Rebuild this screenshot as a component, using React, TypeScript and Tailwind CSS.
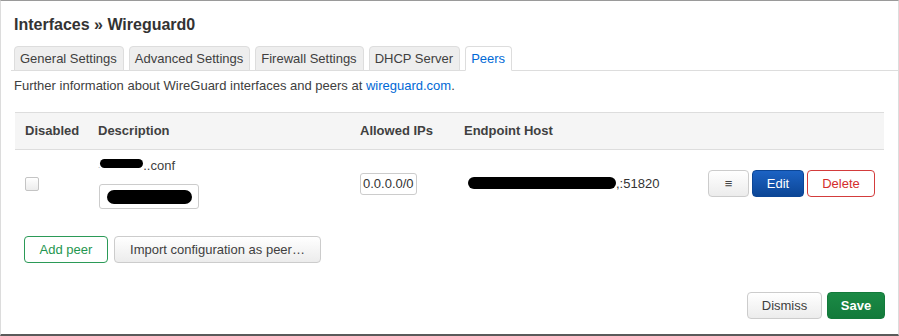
const TABS = [
  { label: 'General Settings', active: false },
  { label: 'Advanced Settings', active: false },
  { label: 'Firewall Settings', active: false },
  { label: 'DHCP Server', active: false },
  { label: 'Peers', active: true },
]

// redaction blob, as in the screenshot
function Blot({ className }: { className: string }) {
  return <span className={`inline-block bg-black rounded-full ${className}`} />
}

export default function App() {
  return (
    <div className="w-[899px] h-[336px] bg-white border-t border-x border-b-[2px] border-t-[#9a9a9a] border-x-[#dcdcdc] border-b-[#5a5a5a] flex flex-col font-['Liberation_Sans',Arial,sans-serif] text-[13px] text-[#404040]">

      {/* Title */}
      <h3 className="pl-[13px] pt-[14px] text-[16px] leading-[20px] font-bold text-[#333]">
        Interfaces » Wireguard0
      </h3>

      {/* Tabs */}
      <ul className="mt-[11px] ml-[10px] pl-[3px] flex gap-[5px] border-b border-[#ddd]">
        {TABS.map(tab => (
          <li
            key={tab.label}
            className={`h-[25px] pl-[5px] pr-[6px] leading-[23px] border rounded-t-[4px] -mb-px ${
              tab.active
                ? 'bg-white border-[#ddd] border-b-white text-[#0069d6]'
                : 'bg-[#eeeeee] border-[#ddd] text-[#404040]'
            }`}
          >
            {tab.label}
          </li>
        ))}
      </ul>

      <p className="mt-[7px] pl-[13px] leading-[16px]">
        Further information about WireGuard interfaces and peers at{' '}
        <span className="text-[#0069d6]">wireguard.com</span>.
      </p>

      {/* Peers table */}
      <div className="mt-[18px] mx-[14px]">
        <div className="grid grid-cols-[73px_262px_104px_1fr] h-[38px] items-center bg-[#f5f5f5] border-y border-[#ddd] font-bold text-[#404040]">
          <div className="pl-[10px]">Disabled</div>
          <div className="pl-[10px]">Description</div>
          <div className="pl-[10px]">Allowed IPs</div>
          <div className="pl-[10px]">Endpoint Host</div>
        </div>

        <div className="grid grid-cols-[73px_262px_104px_1fr] items-center pt-[8px] pb-[9px]">
          <div className="pl-[10px]">
            <div className="w-[14px] h-[14px] border border-[#c4c4c4] rounded-[2px] bg-gradient-to-b from-white to-[#ececec]" />
          </div>

          <div className="pl-[10px] flex flex-col">
            <div className="h-[16px] leading-[16px] flex items-center">
              <span className="text-[8px] text-[#999]">.</span>
              <Blot className="w-[43px] h-[9px] -mt-[6px]" />
              <span>..conf</span>
            </div>
            <div className="mt-[10px] ml-[1px] w-[100px] h-[25px] border border-[#ccc] rounded-[3px] flex items-center justify-center">
              <Blot className="w-[85px] h-[14px]" />
            </div>
          </div>

          <div className="pl-[10px]">
            <div className="inline-block h-[22px] px-[2px] leading-[20px] border border-[#ccc] rounded-[3px] text-[#333]">
              0.0.0.0/0
            </div>
          </div>

          <div className="pl-[14px] flex items-center">
            <Blot className="w-[148px] h-[12px] -mt-[2px]" />
            <span className="text-[#333]">,:51820</span>
            <div className="ml-auto mr-[9px] flex gap-[3px]">
              <button className="w-[41px] h-[27px] border border-[#ccc] rounded-[4px] bg-gradient-to-b from-white to-[#ececec] text-[#444]">
                ≡
              </button>
              <button className="w-[52px] h-[27px] rounded-[4px] bg-gradient-to-b from-[#1c63c4] to-[#0c4696] text-white border border-[#0c4696]">
                Edit
              </button>
              <button className="w-[68px] h-[27px] rounded-[4px] border border-[#d33c3c] bg-white text-[#d42d2d]">
                Delete
              </button>
            </div>
          </div>
        </div>
      </div>

      {/* Add / import */}
      <div className="mt-[18px] ml-[23px] flex gap-[6px]">
        <button className="w-[84px] h-[27px] rounded-[4px] border border-[#2b9a57] bg-white text-[#1f964f]">
          Add peer
        </button>
        <button className="w-[207px] h-[27px] rounded-[4px] border border-[#ccc] bg-gradient-to-b from-white to-[#ececec] text-[#404040]">
          Import configuration as peer…
        </button>
      </div>

      {/* Footer */}
      <div className="mt-auto mb-[15px] mr-[13px] flex justify-end gap-[5px]">
        <button className="w-[75px] h-[27px] rounded-[4px] border border-[#ccc] bg-gradient-to-b from-white to-[#ececec] text-[#404040]">
          Dismiss
        </button>
        <button className="w-[58px] h-[27px] rounded-[4px] border border-[#137a3b] bg-gradient-to-b from-[#1b8a45] to-[#137a3b] text-white font-bold">
          Save
        </button>
      </div>
    </div>
  )
}
